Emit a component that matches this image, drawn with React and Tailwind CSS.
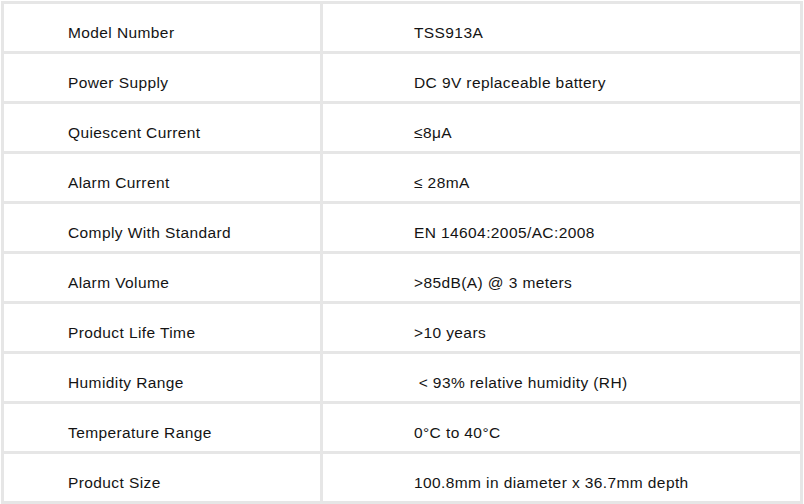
import React from 'react';

// Spec sheet rows
const specs = [
  ['Model Number', 'TSS913A'],
  ['Power Supply', 'DC 9V replaceable battery'],
  ['Quiescent Current', '≤8μA'],
  ['Alarm Current', '≤ 28mA'],
  ['Comply With Standard', 'EN 14604:2005/AC:2008'],
  ['Alarm Volume', '>85dB(A) @ 3 meters'],
  ['Product Life Time', '>10 years'],
  ['Humidity Range', '\u00a0< 93% relative humidity (RH)'],
  ['Temperature Range', '0°C to 40°C'],
  ['Product Size', '100.8mm in diameter x 36.7mm depth'],
];

function App() {
  return (
    <div className="w-[804px] h-[504px] bg-white pt-[1px] pl-[1px]">
      <div
        className="grid grid-cols-[316px_477px] auto-rows-[47px] gap-[3px] p-[3px] bg-[#e6e6e6] w-[802px] text-[15.5px] tracking-[0.4px] text-[#141414]"
        style={{ fontFamily: '"Liberation Sans", Arial, sans-serif' }}
      >
        {specs.map(([label, value]) => (
          <React.Fragment key={label}>
            <div className="bg-white flex items-center pt-[11px] pl-[64px] whitespace-pre">{label}</div>
            <div className="bg-white flex items-center pt-[11px] pl-[91px] whitespace-pre">{value}</div>
          </React.Fragment>
        ))}
      </div>
    </div>
  );
}

export default App;
